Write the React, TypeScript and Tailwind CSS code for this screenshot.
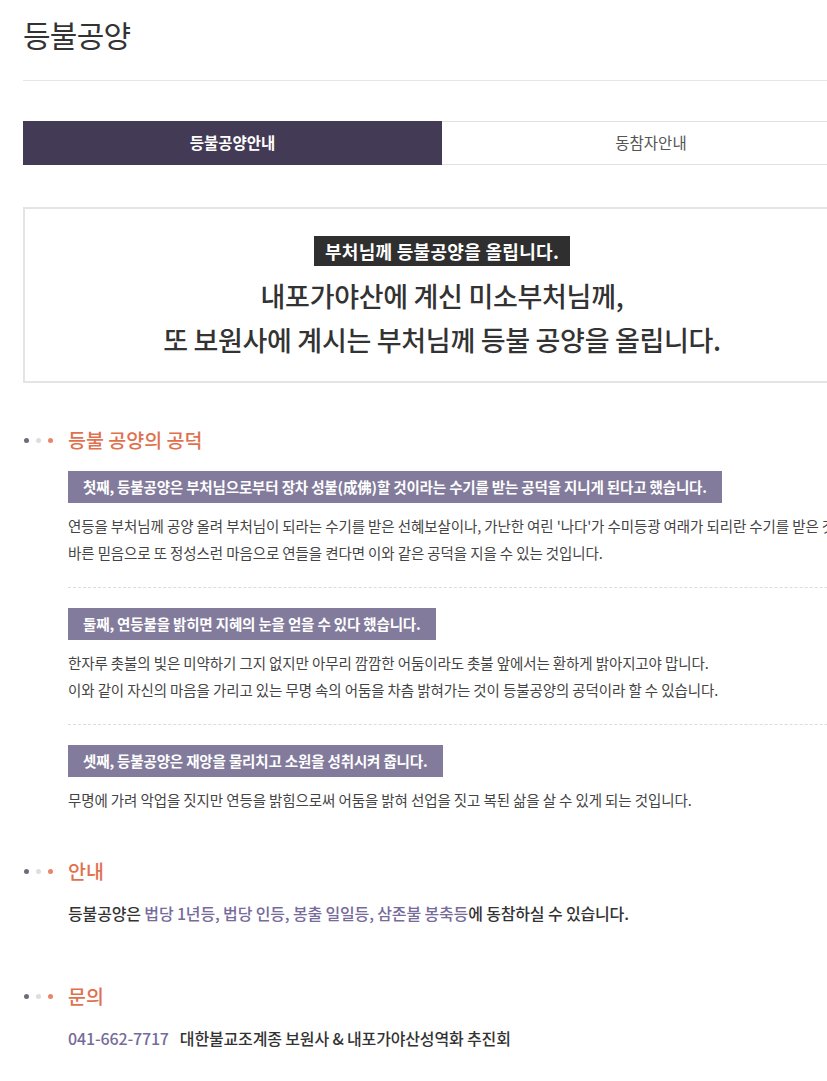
import React from "react";

const Dots = () => (
  <div className="flex items-center gap-[7px] pl-[1px] w-[45px] shrink-0">
    <span className="w-[5px] h-[5px] rounded-full bg-[#6e6c7c]" />
    <span className="w-[5px] h-[5px] rounded-full bg-[#dedede]" />
    <span className="w-[5px] h-[5px] rounded-full bg-[#e8866a]" />
  </div>
);

const SectionTitle = ({ title, className }: { title: string; className?: string }) => (
  <div className={"flex items-center " + (className ?? "")}>
    <Dots />
    <h3 className="text-[19.5px] leading-[28px] font-medium tracking-[0px] text-[#e0714f]">{title}</h3>
  </div>
);

const Label = ({ children }: { children: React.ReactNode }) => (
  <div className="inline-block bg-[#827b9c] px-[15px] text-[14.5px] leading-[32px] font-bold tracking-[-0.15px] text-white whitespace-nowrap">
    {children}
  </div>
);

const merits = [
  {
    label: "첫째, 등불공양은 부처님으로부터 장차 성불(成佛)할 것이라는 수기를 받는 공덕을 지니게 된다고 했습니다.",
    lines: [
      "연등을 부처님께 공양 올려 부처님이 되라는 수기를 받은 선혜보살이나, 가난한 여린 '나다'가 수미등광 여래가 되리란 수기를 받은 것처럼",
      "바른 믿음으로 또 정성스런 마음으로 연들을 켠다면 이와 같은 공덕을 지을 수 있는 것입니다.",
    ],
  },
  {
    label: "둘째, 연등불을 밝히면 지혜의 눈을 얻을 수 있다 했습니다.",
    lines: [
      "한자루 촛불의 빛은 미약하기 그지 없지만 아무리 깜깜한 어둠이라도 촛불 앞에서는 환하게 밝아지고야 맙니다.",
      "이와 같이 자신의 마음을 가리고 있는 무명 속의 어둠을 차츰 밝혀가는 것이 등불공양의 공덕이라 할 수 있습니다.",
    ],
  },
  {
    label: "셋째, 등불공양은 재앙을 물리치고 소원을 성취시켜 줍니다.",
    lines: ["무명에 가려 악업을 짓지만 연등을 밝힘으로써 어둠을 밝혀 선업을 짓고 복된 삶을 살 수 있게 되는 것입니다."],
  },
];

export default function App() {
  return (
    <div className="w-[827px] overflow-hidden bg-white font-['Noto_Sans_CJK_KR','Noto_Sans',sans-serif] text-[#333]">
      <div className="ml-[23px] w-[838px] pt-[14px] pb-[28px]">
        {/* title */}
        <h1 className="text-[30px] leading-[40px] font-normal tracking-[-0.75px] text-[#333]">등불공양</h1>
        <div className="mt-[26px] border-t border-[#e6e6e6]" />

        {/* tabs */}
        <div className="mt-[40px] flex h-[44px]">
          <div className="w-1/2 bg-[#433a56] flex items-center justify-center text-[15.5px] font-bold text-white">
            등불공양안내
          </div>
          <div className="w-1/2 border-y border-r border-[#e2e2e2] flex items-center justify-center text-[15.5px] text-[#555]">
            동참자안내
          </div>
        </div>

        {/* intro box */}
        <div className="mt-[42px] border-2 border-[#e4e4e4] pt-[27px] pb-[19px] flex flex-col items-center">
          <div className="bg-[#2f2f2f] px-[11px] text-[18px] leading-[30px] font-bold tracking-[0.3px] text-white">
            부처님께 등불공양을 올립니다.
          </div>
          <p className="mt-[8px] text-center text-[27px] leading-[44px] font-medium tracking-[-0.3px] text-[#333]">
            내포가야산에 계신 미소부처님께,
            <br />
            또 보원사에 계시는 부처님께 등불 공양을 올립니다.
          </p>
        </div>

        {/* merits */}
        <SectionTitle title="등불 공양의 공덕" className="mt-[43px]" />
        <div className="pl-[45px] mt-[17px]">
          {merits.map((m, i) => (
            <div key={i}>
              {i > 0 && <div className="mt-[21px] mb-[20px] border-t border-dashed border-[#dcdcdc] w-[900px]" />}
              <Label>{m.label}</Label>
              <div className="mt-[9px] text-[14.5px] leading-[27px] tracking-[-0.1px] text-[#444] whitespace-nowrap">
                {m.lines.map((l, j) => (
                  <p key={j}>{l}</p>
                ))}
              </div>
            </div>
          ))}
        </div>

        {/* guide */}
        <SectionTitle title="안내" className="mt-[44px]" />
        <p className="pl-[45px] mt-[14px] text-[16px] leading-[28px] font-medium tracking-[-0.15px] text-[#333] whitespace-nowrap">
          등불공양은{" "}
          <span className="text-[#766b9b]">법당 1년등, 법당 인등, 봉출 일일등, 삼존불 봉축등</span>에 동참하실 수 있습니다.
        </p>

        {/* contact */}
        <SectionTitle title="문의" className="mt-[55px]" />
        <p className="pl-[45px] mt-[14px] text-[16px] leading-[28px] font-medium tracking-[-0.15px] text-[#333] whitespace-nowrap">
          <span className="text-[#766b9b] mr-[11px]">041-662-7717</span>
          대한불교조계종 보원사 &amp; 내포가야산성역화 추진회
        </p>
      </div>
    </div>
  );
}
